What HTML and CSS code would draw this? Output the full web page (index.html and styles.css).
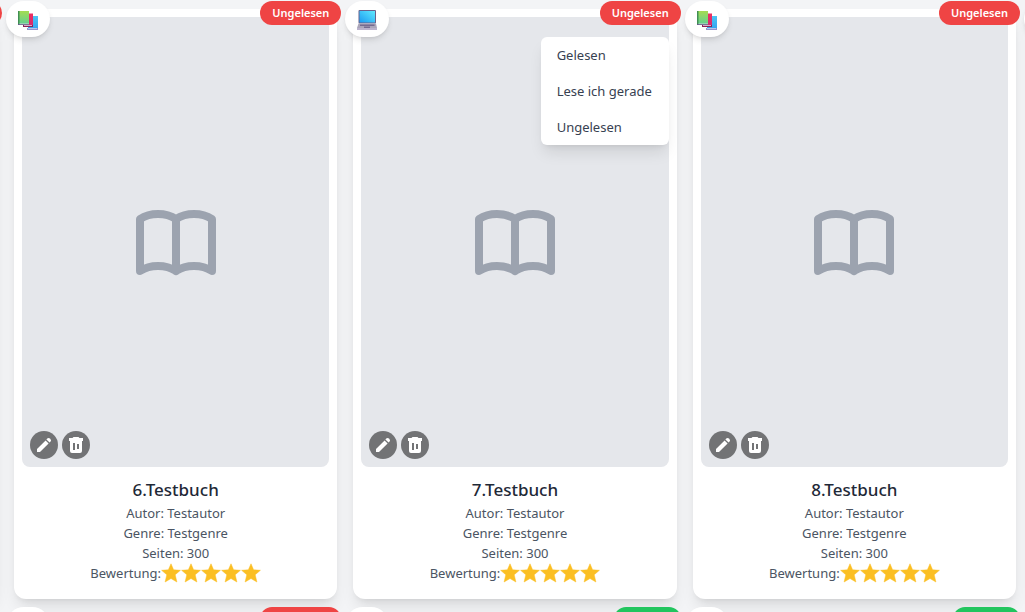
FILE: index.html
```html
<!DOCTYPE html>
<html lang="de">
<head>
  <meta charset="utf-8">
  <meta name="viewport" content="width=device-width, initial-scale=1.0">
  <title>Bücher</title>
  <link rel="stylesheet" href="styles.css">
</head>
<body>

<svg class="sprite" aria-hidden="true">
  <defs>
    <linearGradient id="green" x1="0" y1="0" x2="0" y2="1"><stop offset="0" stop-color="#a4dc52"/><stop offset="1" stop-color="#62cf92"/></linearGradient>
    <linearGradient id="red" x1="0" y1="0" x2="0" y2="1"><stop offset="0" stop-color="#ee2f62"/><stop offset="1" stop-color="#d52a6c"/></linearGradient>
    <linearGradient id="blue" x1="0" y1="0" x2="0" y2="1"><stop offset="0" stop-color="#4cc4f5"/><stop offset="1" stop-color="#35a5ef"/></linearGradient>
    <linearGradient id="screen" x1="0" y1="1" x2="1" y2="0"><stop offset="0" stop-color="#1b9bf0"/><stop offset="1" stop-color="#5fe9ff"/></linearGradient>
  </defs>
  <symbol id="books" viewBox="0 -1 20 20">
    <path fill="url(#blue)" d="M10 5h10v12H10z"/>
    <path fill="#8d93cf" d="M9 17h11v2H9z"/>
    <path fill="#b9c4ea" d="M10 17h9v1h-9z"/>
    <path fill="url(#red)" d="M5 2.500h10V14H5z"/>
    <path fill="#8b2156" d="M5 14h10v2H5z"/>
    <path fill="#d4b1ca" d="M6 14h8v1H6z"/>
    <path fill="url(#green)" d="M0 0h11v13H0z"/>
    <path fill="#418f54" d="M0 0h1.500v14H0z"/>
    <path fill="#655d86" d="M0 13h11v1H0z"/>
    <path fill="#c9d5d5" d="M1.500 12.500H11v.700H1.500z"/>
  </symbol>
  <symbol id="laptop" viewBox="0 0 20 20">
    <rect x="1.500" width="17.500" height="13.500" rx="1" fill="#69618c"/>
    <path fill="url(#screen)" d="M2.500 1H18v11.500H2.500z"/>
    <path fill="#aaa5b9" d="M1.500 13.500h17.500L20 18H0z"/>
    <path fill="#756b91" d="M3 14.500h14.500v1.500H3zM7 16.500h6V18H7z"/>
    <path fill="#bbb2cc" d="M0 18h20v2H0z"/>
  </symbol>
  <symbol id="book-open" viewBox="0 0 24 24">
    <path fill="none" stroke="currentColor" stroke-width="2" stroke-linecap="round" stroke-linejoin="round" d="M12 6.253v13m0-13C10.832 5.477 9.246 5 7.500 5S4.168 5.477 3 6.253v13C4.168 18.477 5.754 18 7.500 18s3.332.477 4.500 1.253m0-13C13.168 5.477 14.754 5 16.500 5c1.747 0 3.332.477 4.500 1.253v13C19.832 18.477 18.247 18 16.500 18c-1.746 0-3.332.477-4.500 1.253"/>
  </symbol>
  <symbol id="pencil" viewBox="0 0 20 20">
    <path fill="currentColor" d="M13.200 3.600a2 2 0 012.800 0l.400.400a2 2 0 010 2.800l-.800.800-3.200-3.200zM11.600 5.400L3 14v3h3l8.600-8.600z"/>
  </symbol>
  <symbol id="trash" viewBox="0 0 20 20">
    <path fill="currentColor" fill-rule="evenodd" d="M7.500 2h5l1 1H17v3h-1v10a2 2 0 01-2 2H6a2 2 0 01-2-2V6H3V3h3.500zM7 8v7h2V8zm4 1v5h2V9z"/>
  </symbol>
  <symbol id="star" viewBox="0 0 20 20">
    <path fill="currentColor" stroke="currentColor" stroke-width=".5" stroke-linejoin="round" d="M10 .800l2.600 6 6.800.500-5.200 4.400 1.700 7.300L10 15.500 4.100 19l1.700-7.300L.600 7.300l6.800-.500z"/>
  </symbol>
</svg>

<main class="book-grid">
  <article class="card">
    <button class="badge badge-red" type="button">Ungelesen</button>
  </article>

  <article class="card">
    <button class="format" type="button" aria-label="Buch"><svg><use href="#books"/></svg></button>
    <button class="badge badge-red" type="button">Ungelesen</button>
    <div class="cover">
      <svg class="cover-icon"><use href="#book-open"/></svg>
      <div class="actions">
        <button class="action" type="button" aria-label="Bearbeiten"><svg><use href="#pencil"/></svg></button>
        <button class="action" type="button" aria-label="Löschen"><svg><use href="#trash"/></svg></button>
      </div>
    </div>
    <div class="info">
      <h2>6.Testbuch</h2>
      <p>Autor: Testautor</p>
      <p>Genre: Testgenre</p>
      <p>Seiten: 300</p>
      <p class="rating">Bewertung:<svg><use href="#star"/></svg><svg><use href="#star"/></svg><svg><use href="#star"/></svg><svg><use href="#star"/></svg><svg><use href="#star"/></svg></p>
    </div>
  </article>

  <article class="card">
    <button class="format" type="button" aria-label="E-Book"><svg><use href="#laptop"/></svg></button>
    <button class="badge badge-red" type="button">Ungelesen</button>
    <div class="menu">
      <button type="button">Gelesen</button>
      <button type="button">Lese ich gerade</button>
      <button type="button">Ungelesen</button>
    </div>
    <div class="cover">
      <svg class="cover-icon"><use href="#book-open"/></svg>
      <div class="actions">
        <button class="action" type="button" aria-label="Bearbeiten"><svg><use href="#pencil"/></svg></button>
        <button class="action" type="button" aria-label="Löschen"><svg><use href="#trash"/></svg></button>
      </div>
    </div>
    <div class="info">
      <h2>7.Testbuch</h2>
      <p>Autor: Testautor</p>
      <p>Genre: Testgenre</p>
      <p>Seiten: 300</p>
      <p class="rating">Bewertung:<svg><use href="#star"/></svg><svg><use href="#star"/></svg><svg><use href="#star"/></svg><svg><use href="#star"/></svg><svg><use href="#star"/></svg></p>
    </div>
  </article>

  <article class="card">
    <button class="format" type="button" aria-label="Buch"><svg><use href="#books"/></svg></button>
    <button class="badge badge-red" type="button">Ungelesen</button>
    <div class="cover">
      <svg class="cover-icon"><use href="#book-open"/></svg>
      <div class="actions">
        <button class="action" type="button" aria-label="Bearbeiten"><svg><use href="#pencil"/></svg></button>
        <button class="action" type="button" aria-label="Löschen"><svg><use href="#trash"/></svg></button>
      </div>
    </div>
    <div class="info">
      <h2>8.Testbuch</h2>
      <p>Autor: Testautor</p>
      <p>Genre: Testgenre</p>
      <p>Seiten: 300</p>
      <p class="rating">Bewertung:<svg><use href="#star"/></svg><svg><use href="#star"/></svg><svg><use href="#star"/></svg><svg><use href="#star"/></svg><svg><use href="#star"/></svg></p>
    </div>
  </article>

  <article class="card">
    <button class="format" type="button" aria-label="Buch"><svg><use href="#books"/></svg></button>
  </article>

  <!-- next row -->
  <article class="card"></article>
  <article class="card">
    <button class="format" type="button" aria-label="Buch"><svg><use href="#books"/></svg></button>
    <button class="badge badge-red" type="button">Ungelesen</button>
  </article>
  <article class="card">
    <button class="format" type="button" aria-label="Buch"><svg><use href="#books"/></svg></button>
    <button class="badge badge-green" type="button">Gelesen</button>
  </article>
  <article class="card">
    <button class="format" type="button" aria-label="Buch"><svg><use href="#books"/></svg></button>
    <button class="badge badge-green" type="button">Gelesen</button>
  </article>
  <article class="card"></article>
</main>

</body>
</html>
```
FILE: styles.css
```css
* { box-sizing: border-box; }

body {
  margin: 0;
  height: 100vh;
  overflow: hidden;
  background: #f3f4f6;
  color: #4b5563;
  font-family: "Segoe UI", "Noto Sans", sans-serif;
  font-size: 13px;
  line-height: 20px;
}

h2, p { margin: 0; }
button { border: 0; margin: 0; font: inherit; color: inherit; cursor: pointer; }
svg { display: block; }
.sprite { position: absolute; width: 0; height: 0; }

/* three full columns, the neighbours run off both sides */
.book-grid {
  --col: calc((100vw - 55px) / 3);
  display: grid;
  grid-template-columns: repeat(5, var(--col));
  gap: 16px;
  margin-left: calc(-2px - var(--col));
  padding-top: 9px;
}

.card {
  position: relative;
  min-height: 120px;
  padding: 8px;
  background: #fff;
  border-radius: 12px;
  box-shadow: 0 10px 15px -3px rgba(0, 0, 0, .1), 0 4px 6px -4px rgba(0, 0, 0, .1);
}

.format {
  position: absolute;
  top: -8px;
  left: -8px;
  z-index: 1;
  padding: 9px 12px 7px;
  background: #fff;
  border-radius: 18px;
  box-shadow: 0 4px 6px -1px rgba(0, 0, 0, .1), 0 2px 4px -2px rgba(0, 0, 0, .1);
}
.format svg { width: 20px; height: 20px; }

.badge {
  position: absolute;
  top: -8px;
  right: -4px;
  z-index: 1;
  padding: 4px 12px;
  border-radius: 12px;
  color: #fff;
  font-size: 11px;
  font-weight: 600;
  line-height: 16px;
}
.badge-red { background: #ef4444; }
.badge-green { background: #22c55e; }

.menu {
  position: absolute;
  top: 28px;
  right: 8px;
  z-index: 2;
  width: 128px;
  overflow: hidden;
  background: #fff;
  border-radius: 6px;
  box-shadow: 0 10px 15px -3px rgba(0, 0, 0, .1), 0 4px 6px -4px rgba(0, 0, 0, .1);
}
.menu button {
  display: block;
  width: 100%;
  padding: 8px 16px;
  background: none;
  color: #374151;
  text-align: left;
  white-space: nowrap;
}

.cover {
  position: relative;
  display: flex;
  align-items: center;
  justify-content: center;
  height: 450px;
  background: #e5e7eb;
  border-radius: 8px;
}
.cover-icon { width: 96px; height: 96px; color: #9ca3af; }

.actions {
  position: absolute;
  bottom: 8px;
  left: 8px;
  display: flex;
  gap: 4px;
}
.action {
  padding: 4px;
  background: rgba(0, 0, 0, .5);
  border-radius: 50%;
  color: #fff;
}
.action svg { width: 20px; height: 20px; }

.info { padding: 9px 0 8px; text-align: center; }
.info h2 { color: #1f2937; font-size: 17px; font-weight: 500; line-height: 27px; }
.rating { display: flex; align-items: center; justify-content: center; }
.rating svg { width: 20px; height: 20px; color: #fbbf24; }
```
